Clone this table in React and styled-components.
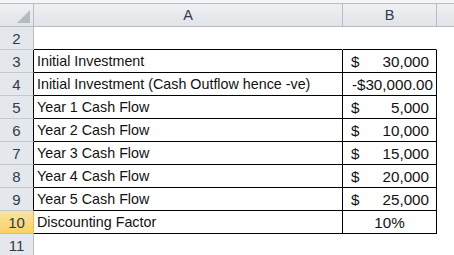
import React from "react";
import styled, { createGlobalStyle } from "styled-components";

const GlobalStyle = createGlobalStyle`
  html, body {
    margin: 0;
    padding: 0;
    background: #fff;
  }
  body {
    font-family: "Liberation Sans", Arial, sans-serif;
  }
`;

const rows = [
  { n: 2 },
  { n: 3, label: "Initial Investment", cur: "$", amount: "30,000" },
  { n: 4, label: "Initial Investment (Cash Outflow hence -ve)", plain: "-$30,000.00" },
  { n: 5, label: "Year 1 Cash Flow", cur: "$", amount: "5,000" },
  { n: 6, label: "Year 2 Cash Flow", cur: "$", amount: "10,000" },
  { n: 7, label: "Year 3 Cash Flow", cur: "$", amount: "15,000" },
  { n: 8, label: "Year 4 Cash Flow", cur: "$", amount: "20,000" },
  { n: 9, label: "Year 5 Cash Flow", cur: "$", amount: "25,000" },
  { n: 10, label: "Discounting Factor", center: "10%", selected: true },
  { n: 11 },
];

const Sheet = () => {
  return (
    <>
      <GlobalStyle />
      <Grid>
        <TopStrip />
        <Corner>
          <CornerMark />
        </Corner>
        <ColHeader>A</ColHeader>
        <ColHeader>B</ColHeader>
        <ColHeader $last />
        {rows.map((r) => {
          const inTable = r.n >= 3 && r.n <= 10;
          const edge = r.n >= 2 && r.n <= 10;
          return (
            <React.Fragment key={r.n}>
              <RowHeader $selected={r.selected} $dark={inTable}>
                {r.n}
              </RowHeader>
              <Cell $bordered={inTable} $bottom={edge}>
                {r.label}
              </Cell>
              <Cell $bordered={inTable} $bottom={edge} $value>
                {r.cur && (
                  <Money>
                    <span>{r.cur}</span>
                    <span>{r.amount}</span>
                  </Money>
                )}
                {r.plain && <Plain>{r.plain}</Plain>}
                {r.center && <Centered>{r.center}</Centered>}
              </Cell>
              <Cell />
            </React.Fragment>
          );
        })}
      </Grid>
    </>
  );
};

const Grid = styled.div`
  display: grid;
  grid-template-columns: 34px 309px 94px 1fr;
  grid-template-rows: 3px 24px repeat(10, 23px);
  width: 454px;
  height: 255px;
  overflow: hidden;
  font-size: 14.3px;
  color: #111;
`;

const TopStrip = styled.div`
  grid-column: 1 / -1;
  background: #f4f5f7;
`;

const headerBg = "linear-gradient(#eef0f3, #e1e4e8)";

const Corner = styled.div`
  position: relative;
  background: ${headerBg};
  border-top: 1px solid #b9bdc3;
  border-right: 1px solid #b9bdc3;
  border-bottom: 1px solid #b9bdc3;
`;

const CornerMark = styled.div`
  position: absolute;
  right: 3px;
  bottom: 3px;
  width: 0;
  height: 0;
  border-left: 13px solid transparent;
  border-bottom: 13px solid #b6bbc2;
`;

const ColHeader = styled.div`
  display: flex;
  align-items: center;
  justify-content: center;
  background: ${headerBg};
  border-top: 1px solid #b9bdc3;
  border-right: ${(p) => (p.$last ? "none" : "1px solid #b9bdc3")};
  border-bottom: 1px solid #b9bdc3;
  color: #2f3b4c;
  font-size: 14.5px;
`;

const RowHeader = styled.div`
  display: flex;
  align-items: center;
  justify-content: center;
  background: ${(p) =>
    p.$selected ? "linear-gradient(#fbe3a2, #f8d266)" : "#e4e7eb"};
  border-right: 1px solid
    ${(p) => (p.$selected ? "#f0b94a" : p.$dark ? "#000" : "#b9bdc3")};
  border-bottom: 1px solid ${(p) => (p.$selected ? "#f0b94a" : "#c5c9cf")};
  color: #2f3b4c;
  font-size: 15px;
`;

const Cell = styled.div`
  display: flex;
  align-items: center;
  padding: 0 3px;
  background: #fff;
  border-right: 1px solid ${(p) => (p.$bordered ? "#000" : "transparent")};
  border-bottom: 1px solid ${(p) => (p.$bottom ? "#000" : "transparent")};
  white-space: nowrap;
  overflow: hidden;
  font-size: ${(p) => (p.$value ? "15.2px" : "inherit")};
`;

const Money = styled.div`
  display: flex;
  justify-content: space-between;
  width: 100%;
  padding: 0 4px 0 5px;
`;

const Plain = styled.div`
  width: 100%;
  text-align: right;
  margin-right: -1px;
`;

const Centered = styled.div`
  width: 100%;
  text-align: center;
`;

export default Sheet;
